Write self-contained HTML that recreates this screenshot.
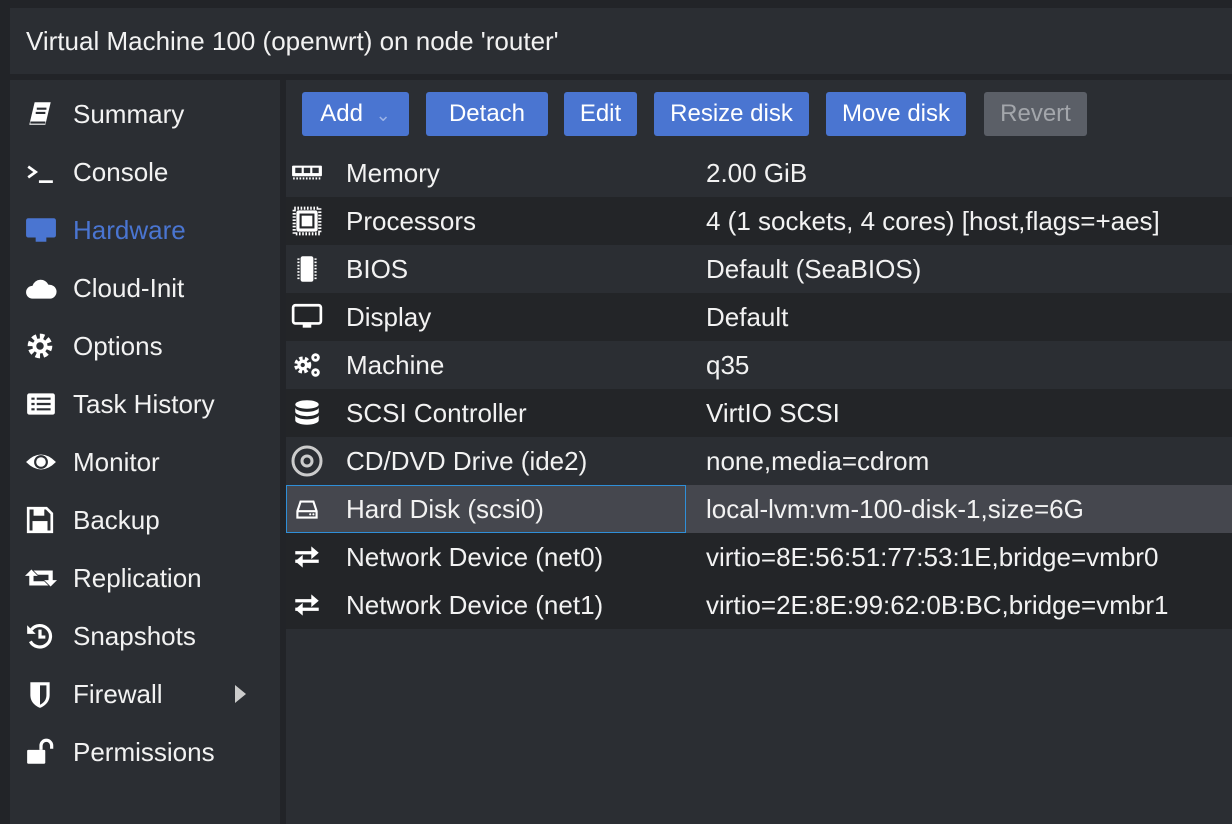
<!DOCTYPE html>
<html><head><meta charset="utf-8"><style>
*{margin:0;padding:0;box-sizing:border-box}
body{width:1232px;height:824px;background:#222428;font-family:"Liberation Sans",sans-serif;color:#f2f2f2;position:relative;overflow:hidden}
.hdr{position:absolute;left:10px;top:8px;width:1222px;height:66px;background:#2b2e33;font-size:26px;line-height:66px;padding-left:16px}
.side{position:absolute;left:10px;top:80px;width:270px;height:744px;background:#2b2e33}
.item{position:absolute;left:0;height:58px;width:270px;font-size:26px;line-height:58px}
.item .t{position:absolute;left:63px}
.item svg{position:absolute;left:15px;top:14px}
.main{position:absolute;left:286px;top:80px;width:946px;height:744px;background:#2b2e33}
.btn{position:absolute;top:12px;height:44px;background:#4a75d1;border-radius:3px;font-size:24px;line-height:44px;text-align:center;color:#fff}
.row{position:absolute;left:0;width:946px;height:48px;font-size:26px;line-height:48px}
.row .n{position:absolute;left:60px}
.row .v{position:absolute;left:420px}
.row svg{position:absolute;left:5px;top:10px}
.d{background:#232528}
</style></head><body>
<div class="hdr">Virtual Machine 100 (openwrt) on node 'router'</div>
<div class="side">
<div class="item" style="top:5px"><svg width="30" height="30" viewBox="0 0 28 28"><path d="M9 3h15l-5 21H4z" fill="#fff"/><path d="M11 9h9M10 13h9" stroke="#2b2e33" stroke-width="2"/><path d="M5 22h14" stroke="#2b2e33" stroke-width="2"/></svg><span class="t">Summary</span></div>
<div class="item" style="top:63px"><svg width="30" height="30" viewBox="0 0 28 28"><path d="M3 9l7 5-7 5" stroke="#fff" stroke-width="2.5" fill="none"/><path d="M13 23h13" stroke="#fff" stroke-width="2.5"/></svg><span class="t">Console</span></div>
<div class="item" style="top:121px;color:#4a75d1"><svg width="32" height="30" viewBox="0 0 30 28"><rect x="1" y="3" width="28" height="18" rx="2" fill="#4a75d1"/><rect x="10" y="21" width="10" height="4" fill="#4a75d1"/></svg><span class="t">Hardware</span></div>
<div class="item" style="top:179px"><svg width="32" height="30" viewBox="0 0 30 28"><path d="M7 24a6 6 0 010-12 8 8 0 0115-1 6.5 6.5 0 012 13z" fill="#fff"/></svg><span class="t">Cloud-Init</span></div>
<div class="item" style="top:237px"><svg width="30" height="30" viewBox="0 0 28 28"><circle cx="14" cy="14" r="9" fill="none" stroke="#fff" stroke-width="5" stroke-dasharray="4 3"/><circle cx="14" cy="14" r="7" fill="#fff"/><circle cx="14" cy="14" r="3.5" fill="#2b2e33"/></svg><span class="t">Options</span></div>
<div class="item" style="top:295px"><svg width="32" height="30" viewBox="0 0 30 28"><rect x="2" y="4" width="26" height="20" rx="2" fill="#fff"/><path d="M6 9h3M11 9h13M6 14h3M11 14h13M6 19h3M11 19h13" stroke="#2b2e33" stroke-width="2"/></svg><span class="t">Task History</span></div>
<div class="item" style="top:353px"><svg width="32" height="30" viewBox="0 0 30 28"><path d="M1 14Q15 0 29 14Q15 28 1 14z" fill="#fff"/><circle cx="15" cy="14" r="6.5" fill="#2b2e33"/><circle cx="15" cy="14" r="4.5" fill="#fff"/></svg><span class="t">Monitor</span></div>
<div class="item" style="top:411px"><svg width="30" height="30" viewBox="0 0 28 28"><path d="M3 3h17l5 5v17H3z" fill="none" stroke="#fff" stroke-width="2.5"/><rect x="8" y="4" width="10" height="6" fill="#fff"/><rect x="7" y="15" width="14" height="9" fill="#fff"/></svg><span class="t">Backup</span></div>
<div class="item" style="top:469px"><svg width="32" height="30" viewBox="0 0 30 28"><path d="M6 6l6 6H8v5h10l4 4H4V12H0z" fill="#fff"/><path d="M24 22l-6-6h4v-5H12L8 7h18v9h4z" fill="#fff"/></svg><span class="t">Replication</span></div>
<div class="item" style="top:527px"><svg width="30" height="30" viewBox="0 0 28 28"><path d="M6 8a10 10 0 11-1 11" fill="none" stroke="#fff" stroke-width="3"/><path d="M2 4v8h8z" fill="#fff"/><path d="M14 8v7h5" stroke="#fff" stroke-width="3" fill="none"/></svg><span class="t">Snapshots</span></div>
<div class="item" style="top:585px"><svg width="30" height="30" viewBox="0 0 28 28"><path d="M5 3h18v12q0 8-9 12Q5 23 5 15z" fill="#fff"/><path d="M14 6h6v9q0 6-6 9z" fill="#2b2e33"/></svg><span class="t">Firewall</span><span style="position:absolute;left:225px;top:20px;border-left:11px solid #ccc;border-top:9px solid transparent;border-bottom:9px solid transparent"></span></div>
<div class="item" style="top:643px"><svg width="32" height="30" viewBox="0 0 30 28"><rect x="2" y="12" width="17" height="13" rx="1" fill="#fff"/><path d="M15 12V8a5 5 0 0110 0v3" stroke="#fff" stroke-width="3" fill="none"/></svg><span class="t">Permissions</span></div>
</div>
<div class="main">
<div class="btn" style="left:16px;width:107px">Add <span style="color:#9cb3e6;font-size:18px;margin-left:6px">&#8964;</span></div>
<div class="btn" style="left:140px;width:122px">Detach</div>
<div class="btn" style="left:278px;width:73px">Edit</div>
<div class="btn" style="left:368px;width:155px">Resize disk</div>
<div class="btn" style="left:540px;width:140px">Move disk</div>
<div class="btn" style="left:698px;width:103px;background:#5b5f67;color:#a3a6ab">Revert</div>

<div class="row" style="top:69px"><svg width="32" height="26" viewBox="0 0 30 24"><rect x="1" y="6" width="28" height="10" rx="1" fill="#fff"/><rect x="4" y="8" width="6" height="5" fill="#2b2e33"/><rect x="12" y="8" width="6" height="5" fill="#2b2e33"/><rect x="20" y="8" width="6" height="5" fill="#2b2e33"/><path d="M2 18h26" stroke="#fff" stroke-width="2" stroke-dasharray="1.5 1.5"/></svg><span class="n">Memory</span><span class="v">2.00 GiB</span></div>
<div class="row d" style="top:117px"><svg width="32" height="32" viewBox="0 0 30 30" style="top:8px"><rect x="3" y="3" width="24" height="24" fill="none" stroke="#fff" stroke-width="3" stroke-dasharray="1.5 1.5"/><rect x="5" y="5" width="20" height="20" rx="2" fill="#fff"/><rect x="8" y="8" width="14" height="14" fill="#232528"/><rect x="10" y="10" width="10" height="10" fill="#fff"/></svg><span class="n">Processors</span><span class="v">4 (1 sockets, 4 cores) [host,flags=+aes]</span></div>
<div class="row" style="top:165px"><svg width="32" height="28" viewBox="0 0 30 26"><rect x="9" y="1" width="12" height="24" rx="2" fill="#fff"/><path d="M7 3v20M23 3v20" stroke="#fff" stroke-width="2" stroke-dasharray="1.5 1.5"/></svg><span class="n">BIOS</span><span class="v">Default (SeaBIOS)</span></div>
<div class="row d" style="top:213px"><svg width="32" height="28" viewBox="0 0 30 26"><rect x="2" y="2" width="26" height="17" rx="2" fill="none" stroke="#fff" stroke-width="2.5"/><rect x="11" y="19" width="8" height="4" fill="#fff"/></svg><span class="n">Display</span><span class="v">Default</span></div>
<div class="row" style="top:261px"><svg width="32" height="28" viewBox="0 0 30 26"><circle cx="11" cy="13" r="6" fill="none" stroke="#fff" stroke-width="4" stroke-dasharray="3 2"/><circle cx="11" cy="13" r="5" fill="#fff"/><circle cx="11" cy="13" r="2" fill="#2b2e33"/><circle cx="23" cy="6" r="4" fill="#fff"/><circle cx="23" cy="20" r="4" fill="#fff"/><circle cx="23" cy="6" r="1.3" fill="#2b2e33"/><circle cx="23" cy="20" r="1.3" fill="#2b2e33"/></svg><span class="n">Machine</span><span class="v">q35</span></div>
<div class="row d" style="top:309px"><svg width="32" height="28" viewBox="0 0 30 26"><ellipse cx="15" cy="5" rx="11" ry="4" fill="#fff"/><path d="M4 8v4c0 2 5 4 11 4s11-2 11-4V8c0 2-5 4-11 4S4 10 4 8zM4 15v5c0 2 5 4 11 4s11-2 11-4v-5c0 2-5 4-11 4S4 17 4 15z" fill="#fff"/></svg><span class="n">SCSI Controller</span><span class="v">VirtIO SCSI</span></div>
<div class="row" style="top:357px"><svg width="34" height="32" viewBox="0 0 34 32" style="top:8px;left:4px"><circle cx="17" cy="16" r="14" fill="none" stroke="#ccc" stroke-width="3"/><circle cx="17" cy="16" r="5" fill="none" stroke="#ccc" stroke-width="3"/></svg><span class="n">CD/DVD Drive (ide2)</span><span class="v">none,media=cdrom</span></div>
<div class="row" style="top:405px;background:#45474e"><div style="position:absolute;left:0;top:0;width:400px;height:48px;border:1.5px solid #2f8fd8"></div><svg width="32" height="28" viewBox="0 0 30 26"><path d="M6 15l3-9h12l3 9v6H6z" fill="none" stroke="#fff" stroke-width="2"/><path d="M6 15h18" stroke="#fff" stroke-width="2"/><circle cx="18" cy="18" r="1" fill="#fff"/><circle cx="21" cy="18" r="1" fill="#fff"/></svg><span class="n">Hard Disk (scsi0)</span><span class="v">local-lvm:vm-100-disk-1,size=6G</span></div>
<div class="row d" style="top:453px"><svg width="32" height="28" viewBox="0 0 30 26"><path d="M4 9h20M4 17h22" stroke="#fff" stroke-width="3"/><path d="M19 3l7 6-7 6z" fill="#fff"/><path d="M11 11l-7 6 7 6z" fill="#fff"/></svg><span class="n">Network Device (net0)</span><span class="v">virtio=8E:56:51:77:53:1E,bridge=vmbr0</span></div>
<div class="row d" style="top:501px"><svg width="32" height="28" viewBox="0 0 30 26"><path d="M4 9h20M4 17h22" stroke="#fff" stroke-width="3"/><path d="M19 3l7 6-7 6z" fill="#fff"/><path d="M11 11l-7 6 7 6z" fill="#fff"/></svg><span class="n">Network Device (net1)</span><span class="v">virtio=2E:8E:99:62:0B:BC,bridge=vmbr1</span></div>
</div>
</body></html>
